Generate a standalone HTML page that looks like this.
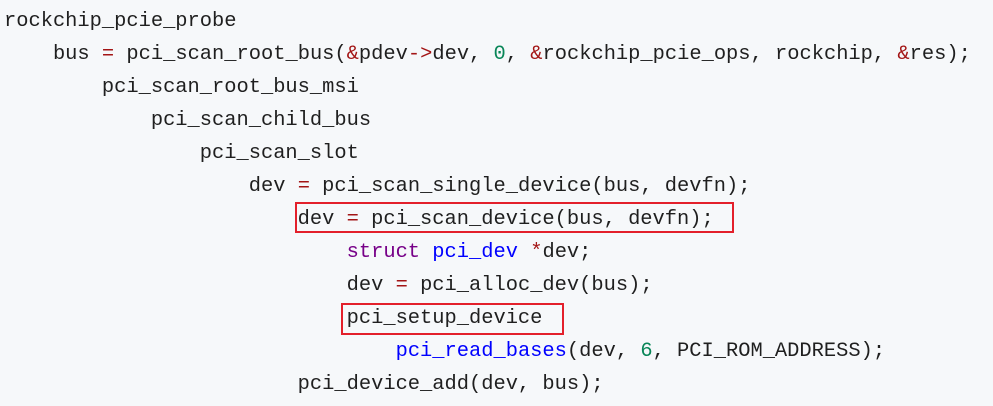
<!DOCTYPE html>
<html><head><meta charset="utf-8"><style>
html,body{margin:0;padding:0;background:#f6f8fa;width:993px;height:406px;overflow:hidden;}
pre{margin:0;padding:5px 0 0 4px;font-family:"Liberation Mono",monospace;font-size:20.4px;line-height:33px;color:#1f1f1f;}
.r{color:#a31515}.n{color:#098658}.k{color:#770088}.b{color:#0000ff}
.box{position:absolute;border:2px solid #e3202b;box-sizing:border-box;}
</style></head><body>
<pre>rockchip_pcie_probe
    bus <span class="r">=</span> pci_scan_root_bus(<span class="r">&amp;</span>pdev<span class="r">-&gt;</span>dev, <span class="n">0</span>, <span class="r">&amp;</span>rockchip_pcie_ops, rockchip, <span class="r">&amp;</span>res);
        pci_scan_root_bus_msi
            pci_scan_child_bus
                pci_scan_slot
                    dev <span class="r">=</span> pci_scan_single_device(bus, devfn);
                        dev <span class="r">=</span> pci_scan_device(bus, devfn);
                            <span class="k">struct</span> <span class="b">pci_dev</span> <span class="r">*</span>dev;
                            dev <span class="r">=</span> pci_alloc_dev(bus);
                            pci_setup_device
                                <span class="b">pci_read_bases</span>(dev, <span class="n">6</span>, PCI_ROM_ADDRESS);
                        pci_device_add(dev, bus);</pre>
<div class="box" style="left:295px;top:202px;width:439px;height:31px"></div>
<div class="box" style="left:341px;top:303px;width:223px;height:32px"></div>
</body></html>
